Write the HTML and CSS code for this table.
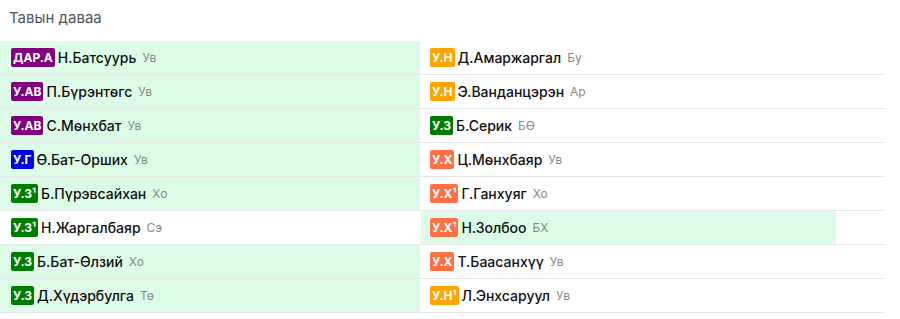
FILE: index.html
```html
<!DOCTYPE html>
<html lang="mn">
<head>
<meta charset="utf-8">
<link rel="stylesheet" href="styles.css">
</head>
<body>
<div class="page">
  <div class="title">Тавын даваа</div>
  <div class="grid">
    <div class="col col-left">
      <div class="row hl"><span class="badge purple">ДАР.А</span><span class="name">Н.Батсуурь</span><span class="reg">Ув</span></div>
      <div class="row hl"><span class="badge purple">У.АВ</span><span class="name">П.Бүрэнтөгс</span><span class="reg">Ув</span></div>
      <div class="row hl"><span class="badge purple">У.АВ</span><span class="name">С.Мөнхбат</span><span class="reg">Ув</span></div>
      <div class="row hl"><span class="badge blue">У.Г</span><span class="name">Ө.Бат-Орших</span><span class="reg">Ув</span></div>
      <div class="row hl"><span class="badge green">У.З¹</span><span class="name">Б.Пүрэвсайхан</span><span class="reg">Хо</span></div>
      <div class="row"><span class="badge green">У.З¹</span><span class="name">Н.Жаргалбаяр</span><span class="reg">Сэ</span></div>
      <div class="row hl"><span class="badge green">У.З</span><span class="name">Б.Бат-Өлзий</span><span class="reg">Хо</span></div>
      <div class="row hl"><span class="badge green">У.З</span><span class="name">Д.Хүдэрбулга</span><span class="reg">Тө</span></div>
    </div>
    <div class="col col-right">
      <div class="row"><span class="badge orange">У.Н</span><span class="name">Д.Амаржаргал</span><span class="reg">Бу</span></div>
      <div class="row"><span class="badge orange">У.Н</span><span class="name">Э.Ванданцэрэн</span><span class="reg">Ар</span></div>
      <div class="row"><span class="badge green">У.З</span><span class="name">Б.Серик</span><span class="reg">БӨ</span></div>
      <div class="row"><span class="badge coral">У.Х</span><span class="name">Ц.Мөнхбаяр</span><span class="reg">Ув</span></div>
      <div class="row"><span class="badge coral">У.Х¹</span><span class="name">Г.Ганхуяг</span><span class="reg">Хо</span></div>
      <div class="row hl-part"><span class="badge coral">У.Х¹</span><span class="name">Н.Золбоо</span><span class="reg">БХ</span></div>
      <div class="row"><span class="badge coral">У.Х</span><span class="name">Т.Баасанхүү</span><span class="reg">Ув</span></div>
      <div class="row"><span class="badge orange">У.Н¹</span><span class="name">Л.Энхсаруул</span><span class="reg">Ув</span></div>
    </div>
  </div>
</div>
</body>
</html>
```
FILE: styles.css
```css
* { box-sizing: border-box; }
html, body { margin: 0; padding: 0; background: #fff; }
body { font-family: Inter, "Noto Sans", sans-serif; color: #111; }
.page { width: 900px; }
.title {
  height: 41px;
  padding: 7px 0 0 9px;
  font-size: 15px;
  line-height: 22px;
  color: #555;
}
.grid {
  display: grid;
  grid-template-columns: 421px 463px;
}
.col { display: flex; flex-direction: column; }
.row {
  display: flex;
  align-items: center;
  height: 34px;
  border-bottom: 1px solid #e5e7eb;
  white-space: nowrap;
}
.col-left .row { padding-left: 11px; margin-right: 1px; }
.col-right .row { padding-left: 9px; }
.row.hl { background: #dcfce7; }
.row.hl-part { background: linear-gradient(to right, #dcfce7 415px, #fff 415px); }
.badge {
  display: inline-block;
  height: 19px;
  line-height: 19px;
  padding: 0 2px;
  border-radius: 2px;
  color: #fff;
  font-size: 12px;
  font-weight: 700;
  margin-right: 3px;
}
.purple { background: #800080; }
.blue { background: #0000e6; }
.green { background: #007d00; }
.orange { background: #ffa500; }
.coral { background: #ff7043; }
.name { font-size: 14px; font-weight: 500; color: #111; }
.reg { font-size: 12px; color: #888; margin-left: 6px; }
```
